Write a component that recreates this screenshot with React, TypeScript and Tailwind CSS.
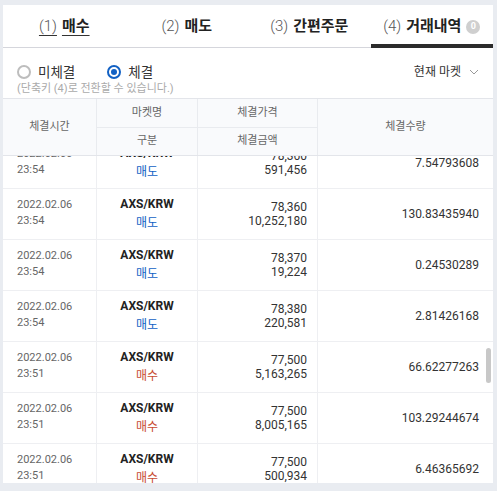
const rows = [
  { date: '2022.02.06', time: '23:54', side: '매도', price: '78,360', total: '591,456', qty: '7.54793608' },
  { date: '2022.02.06', time: '23:54', side: '매도', price: '78,360', total: '10,252,180', qty: '130.83435940' },
  { date: '2022.02.06', time: '23:54', side: '매도', price: '78,370', total: '19,224', qty: '0.24530289' },
  { date: '2022.02.06', time: '23:54', side: '매도', price: '78,380', total: '220,581', qty: '2.81426168' },
  { date: '2022.02.06', time: '23:51', side: '매수', price: '77,500', total: '5,163,265', qty: '66.62277263' },
  { date: '2022.02.06', time: '23:51', side: '매수', price: '77,500', total: '8,005,165', qty: '103.29244674' },
  { date: '2022.02.06', time: '23:51', side: '매수', price: '77,500', total: '500,934', qty: '6.46365692' },
];

const tabs = [
  { no: '(1)', label: '매수' },
  { no: '(2)', label: '매도' },
  { no: '(3)', label: '간편주문' },
  { no: '(4)', label: '거래내역' },
];

export default function App() {
  return (
    <div className="w-[497px] h-[491px] bg-[#e9ecf1] pt-[5px] pl-[3px] font-['Roboto','Noto_Sans_CJK_KR',sans-serif] text-[#333]">
      <div className="relative w-[490px] h-[478px] bg-white flex flex-col overflow-hidden">
        {/* Tabs */}
        <div className="flex h-[43px] border-b border-[#d5d6dc] shrink-0">
          {tabs.map((t, i) => (
            <div
              key={t.no}
              className={`flex-1 flex items-center justify-center gap-[5px] text-[15px] -mb-px ${
                i === 3 ? 'border-b-[4px] border-[#2b2b2b] pt-[4px]' : ''
              }`}
            >
              <span className={`flex items-center gap-[5px] ${i === 0 ? 'underline underline-offset-[4px] decoration-[1px]' : ''}`}>
                <span className="font-light text-[#555]">{t.no}</span>
                <span className="font-bold text-[#222]">{t.label}</span>
              </span>
              {i === 3 && (
                <span className="w-[14px] h-[14px] rounded-full bg-[#cfcfcf] text-white text-[9px] font-bold flex items-center justify-center">
                  0
                </span>
              )}
            </div>
          ))}
        </div>

        {/* Radio filter */}
        <div className="h-[50px] shrink-0 flex justify-between pl-[14px] pr-[14px] pt-[16px]">
          <div className="flex flex-col">
            <div className="flex items-center gap-[32px] text-[13.5px] leading-[16px]">
              <label className="flex items-center gap-[7px]">
                <span className="w-[14px] h-[14px] rounded-full border-2 border-[#bdbdbd]" />
                <span>미체결</span>
              </label>
              <label className="flex items-center gap-[7px]">
                <span className="w-[14px] h-[14px] rounded-full border-2 border-[#1261c4] flex items-center justify-center">
                  <span className="w-[6px] h-[6px] rounded-full bg-[#1261c4]" />
                </span>
                <span>체결</span>
              </label>
            </div>
            <div className="text-[11px] leading-[13px] text-[#aaa] mt-[2px]">(단축키 (4)로 전환할 수 있습니다.)</div>
          </div>
          <div className="flex items-start gap-[8px] text-[12px] leading-[16px] text-[#333]">
            <span>현재 마켓</span>
            <svg width="10" height="16" viewBox="0 0 10 16" className="text-[#999]">
              <path d="M1 6 L5 10 L9 6" fill="none" stroke="currentColor" strokeWidth="1" />
            </svg>
          </div>
        </div>

        {/* Table header */}
        <div className="flex h-[58px] shrink-0 bg-[#f9fafc] border-y border-[#e3e5ea] text-[11px] text-[#666]">
          <div className="w-[94px] flex items-center justify-center border-r border-[#e9ebef]">체결시간</div>
          <div className="w-[101px] flex flex-col border-r border-[#e9ebef]">
            <div className="flex-1 flex items-center justify-center border-b border-[#e9ebef]">마켓명</div>
            <div className="flex-1 flex items-center justify-center">구분</div>
          </div>
          <div className="w-[120px] flex flex-col border-r border-[#e9ebef]">
            <div className="flex-1 flex items-center justify-center border-b border-[#e9ebef]">체결가격</div>
            <div className="flex-1 flex items-center justify-center">체결금액</div>
          </div>
          <div className="flex-1 flex items-center justify-center">체결수량</div>
        </div>

        {/* Body */}
        <div className="flex-1 overflow-hidden">
          <div className="-mt-[18px]">
            {rows.map((r, i) => (
              <div key={i} className="flex h-[51px] border-b border-[#eeeff2]">
                <div className="w-[94px] border-r border-[#eeeff2] pl-[14px] pt-[8px] text-[11px] leading-[16px] text-[#666]">
                  <div>{r.date}</div>
                  <div>{r.time}</div>
                </div>
                <div className="w-[101px] border-r border-[#eeeff2] flex flex-col items-center justify-center text-[12px] leading-[19px]">
                  <div className="font-bold text-[#222]">AXS/KRW</div>
                  <div className={r.side === '매수' ? 'text-[#c84a31]' : 'text-[#1261c4]'}>{r.side}</div>
                </div>
                <div className="w-[120px] border-r border-[#eeeff2] flex flex-col items-end justify-center pr-[10px] text-[12px] leading-[14px] text-[#333]">
                  <div>{r.price}</div>
                  <div>{r.total}</div>
                </div>
                <div className="flex-1 flex items-center justify-end pr-[14px] text-[12px] text-[#333]">{r.qty}</div>
              </div>
            ))}
          </div>
        </div>

        {/* Scrollbar thumb */}
        <div className="absolute left-[483px] top-[343px] w-[5px] h-[35px] rounded-full bg-[#c8c8c8]" />
      </div>
    </div>
  );
}
